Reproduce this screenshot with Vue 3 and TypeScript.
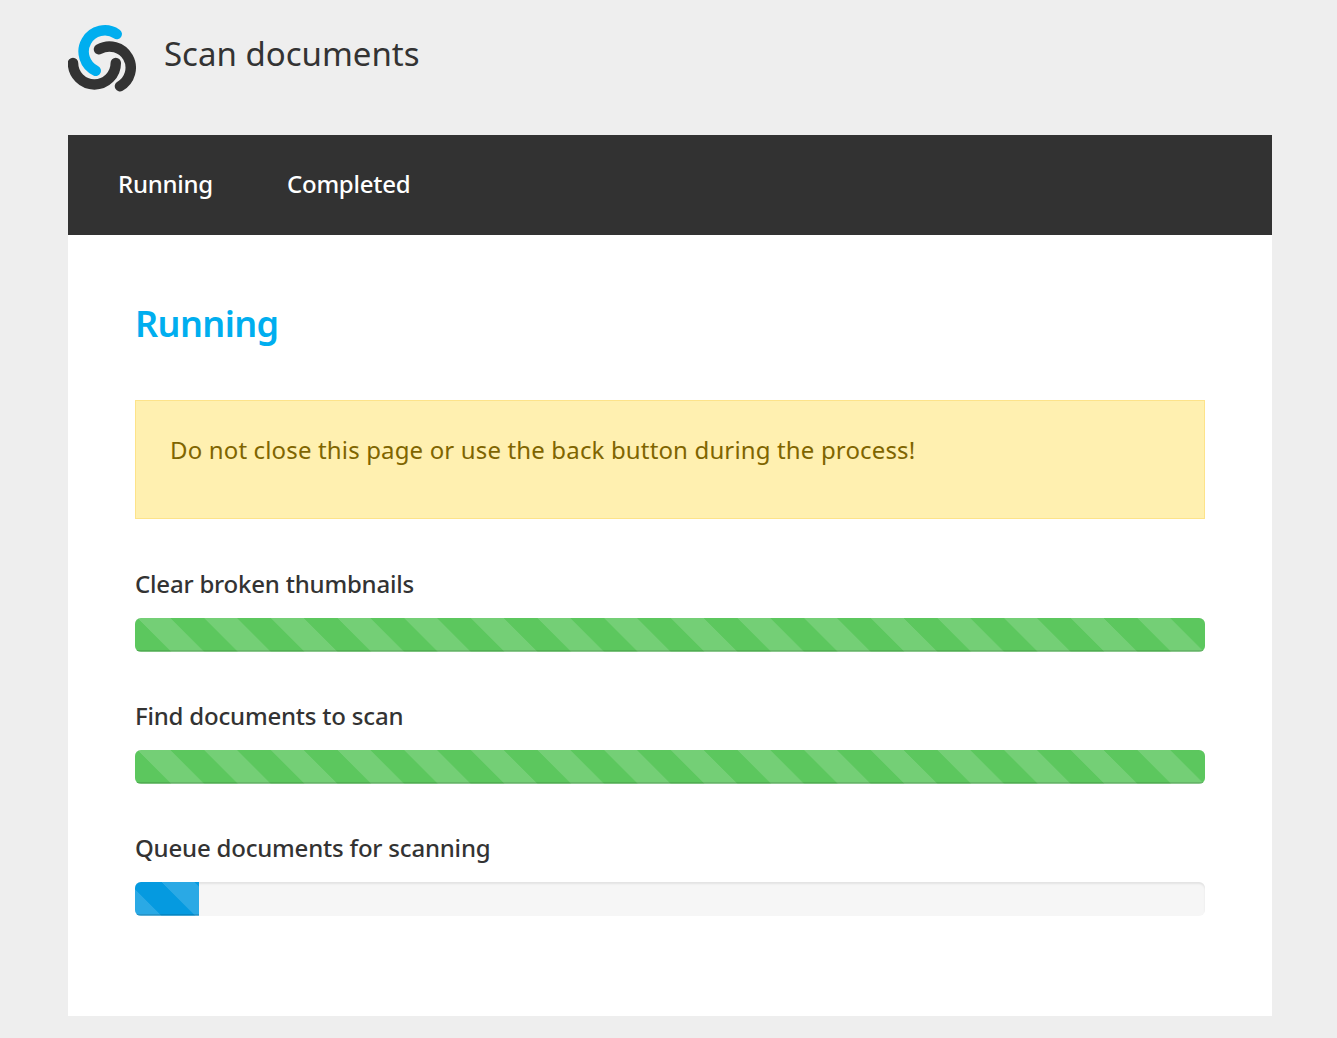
<script setup lang="ts">
interface Task { label: string; percent: number; tone: string }
const tasks: Task[] = [
  { label: 'Clear broken thumbnails', percent: 100, tone: 'green' },
  { label: 'Find documents to scan', percent: 100, tone: 'green' },
  { label: 'Queue documents for scanning', percent: 6, tone: 'blue' },
]
</script>

<template>
  <div class="page">
    <header class="head">
      <svg class="logo" width="70" height="68" viewBox="68 25 70 68" fill="none" stroke-width="10.5" stroke-linecap="round">
        <path d="M116.7 34 A 21.2 21.2 0 1 0 95.7 70.7" stroke="#00aeef" />
        <path d="M99 49.3 A 21.2 21.2 0 1 1 120 86.2" stroke="#333" />
        <path d="M73 63 A 21.4 21.4 0 1 0 115.8 63" stroke="#333" />
      </svg>
      <h1 class="title">Scan documents</h1>
    </header>
    <main class="panel">
      <nav class="nav">
        <a class="nav-link">Running</a>
        <a class="nav-link">Completed</a>
      </nav>
      <section class="body">
        <h2 class="heading">Running</h2>
        <div class="alert">Do not close this page or use the back button during the process!</div>
        <div v-for="t in tasks" :key="t.label" class="task">
          <div class="label">{{ t.label }}</div>
          <div class="track">
            <div class="bar" :class="t.tone" :style="{ width: t.percent + '%' }"></div>
          </div>
        </div>
      </section>
    </main>
  </div>
</template>

<style scoped>
.page { min-height: 1038px; box-sizing: border-box; padding: 0 65px 22px 68px; background: #eee; font-family: "Noto Sans", sans-serif; color: #333; }
.head { height: 135px; display: flex; align-items: flex-start; box-sizing: border-box; padding-top: 25px; }
.logo { display: block; flex: none; }
.title { margin: 5px 0 0 26px; font-size: 33px; line-height: 48px; font-weight: 400; }
.panel { background: #fff; height: 881px; }
.nav { height: 100px; background: #323232; display: flex; align-items: center; padding: 0 0 4px 50px; box-sizing: border-box; gap: 74px; }
.nav-link { color: #fff; font-size: 24px; font-weight: 500; letter-spacing: -.25px; }
.body { padding: 0 67px; }
.heading { margin: 0; padding-top: 62px; height: 165px; box-sizing: border-box; line-height: 54px; font-size: 36px; font-weight: 600; letter-spacing: -.6px; color: #00aeef; }
.alert { height: 119px; box-sizing: border-box; background: #fff0b0; border: 1px solid #fde38a; padding: 29px 34px; font-size: 24px; line-height: 40px; letter-spacing: .15px; color: #7f6500; }
.task { margin-top: 47px; }
.task + .task { margin-top: 46px; }
.label { font-size: 24px; font-weight: 500; letter-spacing: -.2px; line-height: 36px; margin-bottom: 16px; color: #333; }
.track { height: 34px; border-radius: 6px; background: #f6f6f6; overflow: hidden; box-shadow: inset 0 2px 2px rgba(0, 0, 0, .08); }
.bar { height: 100%; background-size: 66.67px 66.67px; box-shadow: inset 0 -1px 0 rgba(255, 255, 255, .25), inset 0 -2px 0 rgba(0, 0, 0, .12); background-image: linear-gradient(45deg, rgba(255,255,255,.15) 25%, transparent 25%, transparent 50%, rgba(255,255,255,.15) 50%, rgba(255,255,255,.15) 75%, transparent 75%, transparent); }
.green { background-color: #5cc75e; background-position: 2px 0; }
.blue { background-color: #059ae0; background-position: 26px 0; }
</style>
